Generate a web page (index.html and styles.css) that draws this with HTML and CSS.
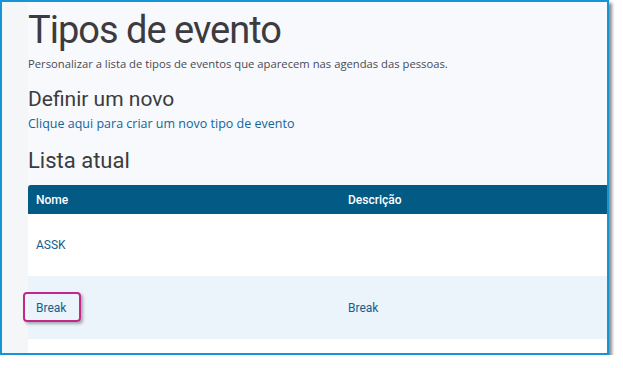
FILE: index.html
```html
<!DOCTYPE html>
<html lang="pt">

<head>
    <meta charset="UTF-8">
    <meta name="viewport" content="width=device-width, initial-scale=1.0">
    <title>Tipos de evento</title>
    <link rel="stylesheet" href="styles.css">
</head>

<body>
    <div class="frame">
        <div class="side"></div>
        <div class="main">
            <h1 class="title">Tipos de evento</h1>
            <p class="lead">Personalizar a lista de tipos de eventos que aparecem nas agendas das pessoas.</p>

            <h2 class="section">Definir um novo</h2>
            <a class="link" href="#">Clique aqui para criar um novo tipo de evento</a>

            <h2 class="section list-title">Lista atual</h2>
            <table class="types">
                <thead>
                    <tr>
                        <th class="col-name">Nome</th>
                        <th>Descrição</th>
                    </tr>
                </thead>
                <tbody>
                    <tr>
                        <td><a href="#">ASSK</a></td>
                        <td></td>
                    </tr>
                    <tr class="alt">
                        <td><a href="#" class="marked">Break</a></td>
                        <td><a href="#">Break</a></td>
                    </tr>
                    <tr>
                        <td></td>
                        <td></td>
                    </tr>
                </tbody>
            </table>
        </div>
    </div>
</body>

</html>
```

FILE: styles.css
```css
* {
    margin: 0;
    padding: 0;
    box-sizing: border-box;
}

body {
    background-color: #ffffff;
    font-family: Roboto, "Liberation Sans", sans-serif;
}

.frame {
    display: flex;
    width: 609px;
    height: 355px;
    border: 2px solid #1496d6;
    box-shadow: 3px 3px 3px rgba(0, 0, 0, 0.45);
    overflow: hidden;
}

.side {
    width: 26px;
    flex-shrink: 0;
    background-color: #f5f6f8;
}

.main {
    flex: 1;
    min-width: 0;
    padding-top: 8px;
    background-color: #f7f9fd;
}

.title {
    font-size: 38px;
    font-weight: 400;
    line-height: 40px;
    letter-spacing: -1px;
    color: #3b3b40;
}

.lead {
    margin-top: 6px;
    font-family: "Open Sans", sans-serif;
    font-size: 11.25px;
    color: #4a4a52;
}

.section {
    margin-top: 16px;
    font-size: 21px;
    font-weight: 400;
    line-height: 24px;
    color: #3b3b40;
}

.link {
    display: block;
    margin-top: 4px;
    font-family: "Open Sans", sans-serif;
    font-size: 12.5px;
    color: #14649a;
    text-decoration: none;
}

.list-title {
    margin-top: 17px;
    font-size: 22px;
}

.types {
    margin-top: 12px;
    width: 700px;
    border-collapse: collapse;
    font-size: 12px;
}

.types th {
    height: 29px;
    padding: 0 8px;
    text-align: left;
    font-weight: 500;
    color: #ffffff;
    background-color: #025a85;
}

.types th:first-child {
    border-top-left-radius: 3px;
}

.col-name {
    width: 312px;
}

.types td {
    height: 62px;
    padding: 0 8px;
    background-color: #ffffff;
}

.types tr.alt td {
    height: 63px;
    background-color: #ebf3fb;
}

.types a {
    color: #155d8c;
    text-decoration: none;
}

.marked {
    position: relative;
}

.marked::after {
    content: "";
    position: absolute;
    left: -13px;
    right: -15px;
    top: -9px;
    bottom: -7px;
    border: 2px solid #c1278c;
    border-radius: 4px;
    box-shadow: 2px 2px 3px rgba(0, 0, 0, 0.3);
}
```
